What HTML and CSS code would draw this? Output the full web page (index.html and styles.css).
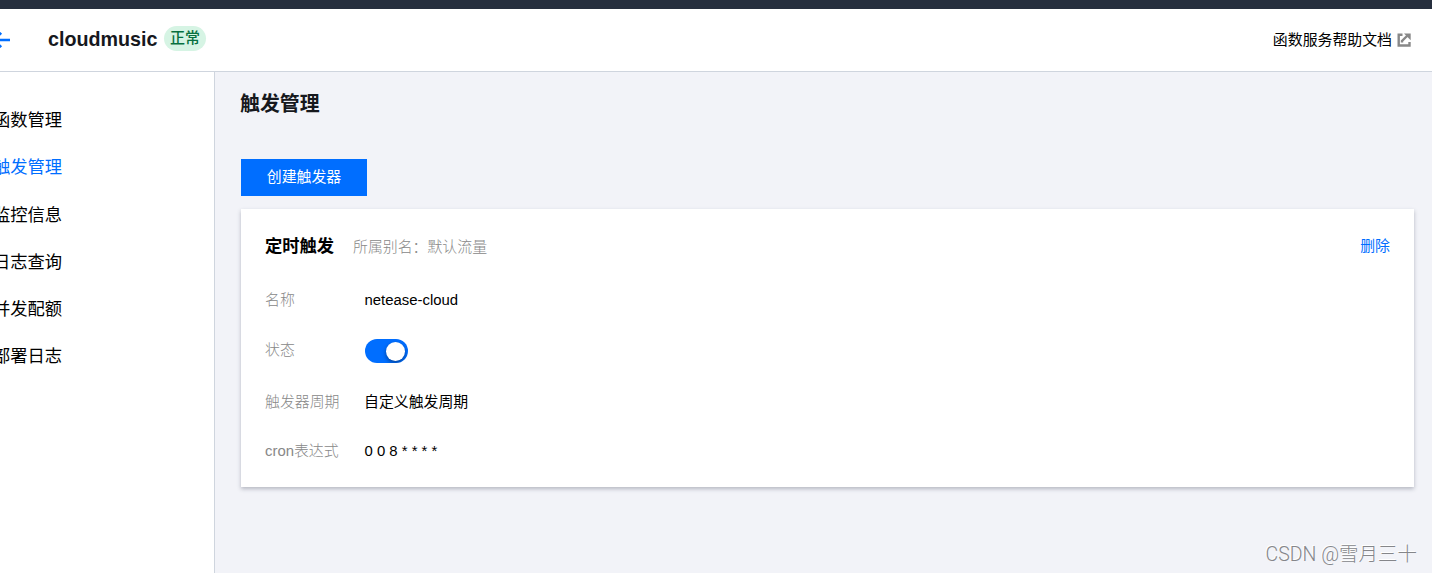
FILE: index.html
```html
<!DOCTYPE html>
<html lang="zh-CN">
<head>
    <meta charset="UTF-8">
    <meta name="viewport" content="width=device-width, initial-scale=1.0">
    <title>cloudmusic - 触发管理</title>
    <link rel="stylesheet" href="styles.css">
</head>
<body>
    <div class="topbar"></div>
    <header class="header">
        <a class="back" href="#" aria-label="返回">
            <svg width="20" height="18" viewBox="0 0 20 18" fill="none" stroke="#006eff" stroke-width="2.5">
                <path d="M20 9H4M11.2 1.8L4 9l7.2 7.2"/>
            </svg>
        </a>
        <h1>cloudmusic</h1>
        <span class="badge">正常</span>
        <a class="help" href="#">
            <span>函数服务帮助文档</span>
            <svg width="14" height="14" viewBox="0 0 14 14" fill="none" stroke="#888" stroke-width="2.4">
                <path d="M5.5 1.7H1.7v10.8h10.8V9"/>
                <path d="M5 9.5V8l5.5-5.5"/>
                <path d="M7 .5h6.7v6.7z" fill="#888" stroke="none"/>
            </svg>
        </a>
    </header>
    <div class="layout">
        <nav class="sidebar">
            <a href="#">函数管理</a>
            <a href="#" class="active">触发管理</a>
            <a href="#">监控信息</a>
            <a href="#">日志查询</a>
            <a href="#">并发配额</a>
            <a href="#">部署日志</a>
        </nav>
        <main class="content">
            <h2>触发管理</h2>
            <button class="create-button">创建触发器</button>
            <section class="card">
                <div class="card-header">
                    <h3>定时触发</h3>
                    <span class="alias">所属别名：默认流量</span>
                    <a class="delete" href="#">删除</a>
                </div>
                <dl class="info">
                    <dt>名称</dt>
                    <dd class="name">netease-cloud</dd>
                    <dt class="raised">状态</dt>
                    <dd><span class="switch"></span></dd>
                    <dt>触发器周期</dt>
                    <dd class="period">自定义触发周期</dd>
                    <dt class="raised">cron表达式</dt>
                    <dd class="cron">0 0 8 * * * *</dd>
                </dl>
            </section>
        </main>
    </div>
    <div class="watermark">CSDN @雪月三十</div>
</body>
</html>
```

FILE: styles.css
```css
* {
    box-sizing: border-box;
}
body {
    margin: 0;
    height: 573px;
    overflow: hidden;
    display: flex;
    flex-direction: column;
    background-color: #f2f3f8;
    color: #000;
    font-family: "Liberation Sans", "Noto Sans CJK SC", sans-serif;
    font-size: 14.9px;
}
h1, h2, h3, dl, dd {
    margin: 0;
}
a {
    color: inherit;
    text-decoration: none;
}
.topbar {
    height: 9px;
    flex-shrink: 0;
    background-color: #262f3e;
}
.header {
    display: flex;
    align-items: center;
    flex-shrink: 0;
    height: 63px;
    padding-right: 21px;
    background-color: #fff;
    border-bottom: 1px solid #cfd5de;
}
.back {
    width: 58px;
    height: 18px;
    margin-left: -10px;
}
.header h1 {
    width: 110px;
    margin-top: -2px;
    color: #16181d;
    font-size: 19.7px;
    line-height: 24px;
    white-space: nowrap;
}
.badge {
    height: 25px;
    margin: -3px 0 0 6px;
    padding: 0 6px;
    border-radius: 13px;
    background-color: #d6f4e4;
    color: #07703f;
    font-size: 15px;
    font-weight: 500;
    line-height: 24px;
}
.help {
    display: flex;
    align-items: center;
    gap: 5px;
    margin-left: auto;
}
.help span {
    padding-bottom: 4px;
}
.layout {
    flex: 1;
    display: flex;
}
.sidebar {
    width: 215px;
    padding-top: 25px;
    background-color: #fff;
    border-right: 1px solid #cfd5de;
}
.sidebar a {
    display: block;
    height: 47.3px;
    margin-left: -7px;
    font-size: 17.3px;
    line-height: 47.3px;
}
.sidebar .active {
    color: #006eff;
}
.content {
    flex: 1;
    padding: 18px 18px 0 26px;
}
.content h2 {
    margin-left: -1px;
    color: #16181d;
    font-size: 19.9px;
    line-height: 28px;
}
.create-button {
    display: block;
    width: 126px;
    height: 37px;
    margin: 41px 0 13px;
    padding: 0 0 4px;
    border: none;
    background-color: #006eff;
    color: #fff;
    font: inherit;
}
.card {
    height: 278px;
    padding: 23px 24px 0;
    background-color: #fff;
    box-shadow: 0 2px 4px rgba(54, 58, 80, 0.32);
}
.card-header {
    display: flex;
    align-items: center;
    height: 26px;
}
.card-header h3 {
    width: 88px;
    padding-bottom: 1px;
    font-size: 17.3px;
}
.alias {
    color: #888;
    font-weight: 300;
}
.delete {
    margin-left: auto;
    padding-bottom: 2px;
    color: #006eff;
}
.info {
    display: grid;
    grid-template-columns: 100px 1fr;
    grid-template-rows: 50px 52px 50px 50px;
    align-items: center;
    margin-top: 17px;
}
.info dt {
    padding-bottom: 4px;
    color: #888;
    font-weight: 300;
}
.info .raised {
    padding-bottom: 6px;
}
.info .period {
    padding-bottom: 4px;
    margin-left: -1px;
}
.info .cron {
    padding-bottom: 3px;
}
.info .name,
.info .cron {
    margin-left: -0.5px;
}
.switch {
    display: flex;
    align-items: center;
    justify-content: flex-end;
    width: 43px;
    height: 24px;
    padding-right: 3px;
    border-radius: 12px;
    background-color: #006eff;
    overflow: hidden;
}
.switch::after {
    content: "";
    width: 19px;
    height: 19px;
    border-radius: 50%;
    background-color: #fff;
    box-shadow: 0 2px 4px rgba(0, 0, 0, 0.4);
}
.watermark {
    position: absolute;
    right: 15px;
    bottom: 4px;
    color: #85868a;
    font-family: Roboto, "Noto Sans CJK SC", sans-serif;
    font-size: 19.5px;
    font-weight: 300;
    line-height: 28px;
    text-shadow: -1px -1px 0 #fff;
}
```
